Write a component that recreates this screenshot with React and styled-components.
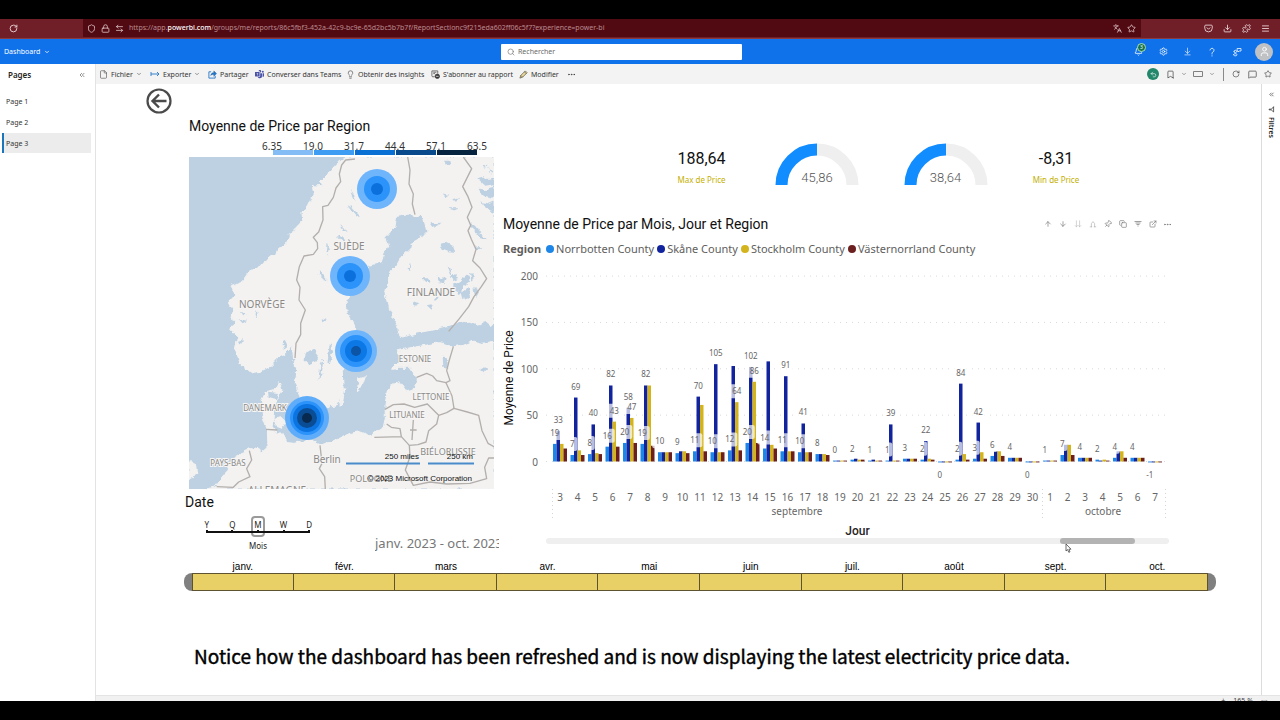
import React from "react";
import styled, { createGlobalStyle } from "styled-components";
import {
  RotateCw, Shield, Lock, ArrowLeftRight, Languages, Star, Pocket, Download, Puzzle, Menu,
  ChevronDown, Search, Bell, Settings, ArrowDownToLine, User, File, Lightbulb,
  Bookmark, MessageSquare, ArrowUp, ArrowDown, Pin, Copy,
  ListFilter, ExternalLink, Ellipsis, ChevronsLeft, Undo2,
} from "lucide-react";
import { BsMicrosoftTeams } from "react-icons/bs";

const ui = `"Noto Sans", "Open Sans", sans-serif`;
const din = `Roboto, "Liberation Sans", sans-serif`;

const Global = createGlobalStyle`
  *, *::before, *::after { box-sizing: border-box; }
  body { margin: 0; background: #000; color: #252423; font-family: ${ui}; }
  button { border: 0; padding: 0; margin: 0; background: none; font: inherit; color: inherit; cursor: pointer; }
  svg { display: block; }
  h1, h2, p { margin: 0; }
`;

const Screen = styled.div`
  display: flex;
  flex-direction: column;
  min-height: 100vh;
  padding: 19px 0;
  background: #000;
`;

/* ---------- browser and app header ---------- */

const BrowserBar = styled.div`
  display: flex;
  height: 20px;
  flex: none;
  background: #701f29;
  color: #e6cfd1;
  border-bottom: 1px solid #8a3a41;
`;
const ReloadSlot = styled.div`
  width: 83px;
  padding: 5px 0 0 9px;
`;
const AddressBar = styled.div`
  flex: 1;
  display: flex;
  align-items: center;
  gap: 5px;
  min-width: 0;
  height: 18px;
  padding: 0 5px 0 4px;
  background: #520a12;
`;
const Url = styled.span`
  flex: 1;
  overflow: hidden;
  white-space: nowrap;
  font-size: 7px;
  line-height: 10px;
  color: #b98c91;
  b { color: #fff; font-weight: 500; }
`;
const IconRow = styled.div`
  display: flex;
  align-items: center;
  padding-right: ${(p) => p.$end || 0}px;
`;
const IconSlot = styled.button`
  display: flex;
  align-items: center;
  justify-content: center;
  flex: none;
  width: ${(p) => p.$w}px;
`;
const BrowserTools = styled(IconRow)`
  width: 139px;
  justify-content: flex-end;
`;

const AppHeader = styled.header`
  display: grid;
  grid-template-columns: 501fr 241fr 538fr;
  align-items: center;
  flex: none;
  height: 25px;
  background: #1072eb;
  color: #fff;
`;
const Crumb = styled.button`
  display: flex;
  align-items: center;
  gap: 4px;
  padding-left: 4px;
  font-size: 7px;
`;
const SearchBox = styled.label`
  display: flex;
  align-items: center;
  gap: 3px;
  height: 16px;
  padding: 0 6px;
  border-radius: 1px;
  background: #fff;
  color: #777;
`;
const SearchInput = styled.input`
  flex: 1;
  min-width: 0;
  border: 0;
  padding: 0;
  outline: none;
  background: none;
  font: 7px/12px ${ui};
  &::placeholder { color: #6a6a6a; opacity: 1; }
`;
const HeaderTools = styled(IconRow)`
  justify-content: flex-end;
`;
const BellWrap = styled.span`
  position: relative;
`;
const BellBadge = styled.span`
  position: absolute;
  left: 3px;
  top: -4px;
  width: 9px;
  height: 9px;
  border: 1px solid #a9e0b4;
  border-radius: 50%;
  background: #16744f;
  font-size: 5px;
  line-height: 7px;
  text-align: center;
`;
const Avatar = styled.span`
  display: flex;
  align-items: center;
  justify-content: center;
  width: 18px;
  height: 18px;
  margin-left: 6px;
  border-radius: 50%;
  background: #bfc1c4;
`;

/* ---------- workspace frame ---------- */

const Workspace = styled.div`
  display: flex;
  flex: 1;
  background: #fff;
`;
const Sidebar = styled.nav`
  width: 96px;
  flex: none;
  border-right: 1px solid #e3e3e3;
`;
const SidebarHead = styled.div`
  display: flex;
  justify-content: space-between;
  align-items: center;
  height: 21px;
  margin-bottom: 6px;
  padding: 0 9px 0 8px;
  font-size: 8px;
  font-weight: 600;
`;
const PageLink = styled.a`
  display: flex;
  align-items: center;
  height: 20px;
  margin: 0 4px 1px 2px;
  padding-left: ${(p) => (p.$active ? 2 : 4)}px;
  border-left: ${(p) => (p.$active ? "2px solid #1b75bb" : "0")};
  background: ${(p) => (p.$active ? "#ececec" : "none")};
  font-size: 7px;
  color: #333;
  text-decoration: none;
`;
const Column = styled.div`
  flex: 1;
  min-width: 0;
  display: flex;
  flex-direction: column;
`;
const Toolbar = styled.div`
  display: flex;
  align-items: center;
  justify-content: space-between;
  flex: none;
  height: 20px;
  padding-left: 3px;
  background: #f3f3f3;
`;
const Commands = styled.div`
  display: flex;
  align-items: center;
`;
const Command = styled.button`
  display: flex;
  align-items: center;
  gap: 3px;
  width: ${(p) => p.$w}px;
  white-space: nowrap;
  font-size: 7px;
  color: #333;
  svg { flex: none; }
`;
const Live = styled.span`
  display: flex;
  align-items: center;
  justify-content: center;
  width: 12px;
  height: 12px;
  border-radius: 50%;
  background: #23876b;
  color: #fff;
`;
const Divider = styled.span`
  width: 1px;
  height: 13px;
  margin: 0 4px 0 8px;
  background: #8a8a8a;
`;
const Stage = styled.div`
  display: flex;
  flex: 1;
`;
const FilterPane = styled.aside`
  display: flex;
  flex-direction: column;
  align-items: center;
  gap: 8px;
  width: 19px;
  flex: none;
  padding-top: 7px;
  border-left: 1px solid #dcdcdc;
`;
const FilterLabel = styled.span`
  writing-mode: vertical-rl;
  margin-top: -4px;
  font-size: 7px;
  line-height: 10px;
  font-weight: 600;
`;
const StatusBar = styled.footer`
  display: flex;
  justify-content: flex-end;
  gap: 8px;
  flex: none;
  height: 6px;
  padding-right: 12px;
  overflow: hidden;
  background: #f1f1f1;
  border-top: 1px solid #e4e4e4;
  font-size: 7px;
  line-height: 10px;
  color: #444;
`;

/* ---------- report canvas ---------- */

const Report = styled.main`
  flex: 1;
  min-width: 0;
  padding: 4px 45px 20px 50px;
`;
const BackButton = styled.button`
  display: block;
  width: 26px;
  height: 26px;
`;
const Visuals = styled.div`
  display: grid;
  grid-template-columns: 314px minmax(0, 1fr);
  column-gap: 4px;
  margin: 4px 0 0 39px;
`;
const Title = styled.h2`
  font: 400 14px/16px ${din};
  color: #111;
`;
const MapVisual = styled.section`
  width: 305px;
  margin-left: 4px;
`;
const DateTitle = styled(Title)`
  margin-top: 5px;
`;
const SlicerRow = styled.div`
  display: flex;
  align-items: flex-start;
  justify-content: space-between;
  margin-top: 6px;
`;
const Granularity = styled.div`
  display: grid;
  grid-template-columns: repeat(5, 1fr);
  align-content: start;
  width: 128px;
  margin-left: 9px;
  font-size: 8px;
  line-height: 10px;
  text-align: center;
`;
const Grain = styled.button`
  display: flex;
  flex-direction: column;
  align-items: center;
  height: 21px;
  padding-top: 4px;
`;
const GrainBox = styled.span`
  width: 14px;
  height: 21px;
  margin: -4px 0;
  padding-top: 2px;
  border: ${(p) => (p.$on ? "2px solid #9a9a9a" : "2px solid transparent")};
  border-radius: 4px;
  &::after {
    content: "";
    display: block;
    width: 2px;
    height: 2px;
    margin: 0 auto;
    background: #111;
  }
`;
const GrainLine = styled.span`
  grid-column: 1 / -1;
  height: 2px;
  margin: -6px 12px 0;
  background: #111;
`;
const GrainName = styled.span`
  grid-column: 1 / -1;
  padding-top: 4px;
`;
const Period = styled.p`
  width: 124px;
  margin-top: 18px;
  overflow: hidden;
  white-space: nowrap;
  font-size: 13px;
  line-height: 18px;
  color: #777;
`;

const Right = styled.div`
  min-width: 0;
`;
const Kpis = styled.div`
  display: grid;
  grid-template-columns: 117fr 114fr 143fr 78fr;
  justify-items: center;
  height: 96px;
  padding: 25px 121px 0 140px;
`;
const Card = styled.div`
  padding-top: 6px;
  text-align: center;
  white-space: nowrap;
`;
const CardValue = styled.p`
  font: 400 16px/20px ${din};
  color: #111;
`;
const CardLabel = styled.p`
  padding-top: 5px;
  font-size: 8px;
  line-height: 12px;
  color: #c4b000;
`;
const GaugeBox = styled.div`
  position: relative;
  width: 84px;
  height: 42px;
`;
const GaugeValue = styled.span`
  position: absolute;
  inset: auto 0 0 0;
  text-align: center;
  font: 300 13px/14px ${din};
  color: #555;
`;
const ChartHead = styled.div`
  display: flex;
  align-items: center;
  justify-content: space-between;
  height: 20px;
  padding-right: 41px;
  color: #777;
`;
const Legend = styled.div`
  display: flex;
  align-items: center;
  gap: 3px;
  height: 16px;
  margin: 7px 0 5px;
  font-size: 11px;
  line-height: 16px;
  white-space: nowrap;
  color: #605e5c;
  b { margin-right: 2px; }
`;
const LegendItem = styled.span`
  display: flex;
  align-items: center;
  gap: 2px;
  &::before {
    content: "";
    width: 8px;
    height: 8px;
    border-radius: 50%;
    background: ${(p) => p.$color};
  }
`;
const ChartSvg = styled.svg`
  width: 100%;
  height: auto;
`;
const AxisName = styled.p`
  padding-right: 4px;
  text-align: center;
  font: 500 12px/14px ${din};
  color: #252423;
`;
const ScrollTrack = styled.div`
  position: relative;
  height: 6px;
  margin: 0 47px 0 43px;
  border-radius: 3px;
  background: #efefef;
`;
const ScrollThumb = styled.div`
  width: 12%;
  height: 6px;
  margin-left: 82.5%;
  border-radius: 3px;
  background: #b3b3b3;
`;
const Pointer = styled.svg`
  position: absolute;
  left: 83.3%;
  top: 5px;
`;

const Timeline = styled.section`
  display: grid;
  grid-template-columns: 8px repeat(10, minmax(0, 1fr)) 8px;
  margin: 8px 0 0 38px;
`;
const Month = styled.span`
  text-align: center;
  font: 10px/13px "Liberation Sans", sans-serif;
  color: #000;
`;
const MonthCell = styled.button`
  height: 18px;
  border: 1px solid #5d5330;
  border-left-width: ${(p) => (p.$first ? 1 : 0)}px;
  background: #e8d066;
`;
const Cap = styled.span`
  height: 18px;
  background: #808080;
  border-radius: ${(p) => (p.$right ? "0 9px 9px 0" : "9px 0 0 9px")};
`;
const Caption = styled.p`
  padding: 50px 0 0 48px;
  font: 700 19px/30px "Noto Sans CJK SC", sans-serif;
  color: #000;
  white-space: nowrap;
  font-weight: 400;
  -webkit-text-stroke: 0.4px #000;
`;

/* ---------- small drawings ---------- */

const Line = ({ size = 10, box = 20, d, w = 1.6, ...rest }) => (
  <svg width={size} height={size} viewBox={`0 0 ${box} ${box}`} fill="none" stroke="currentColor"
    strokeWidth={w} strokeLinecap="round" strokeLinejoin="round" {...rest}>
    <path d={d} />
  </svg>
);

const ExportIcon = () => (
  <svg width="10" height="8" viewBox="0 0 20 16" fill="none" strokeWidth="1.8">
    <path d="M2 4v8" stroke="#2477c9" /><path d="M2 8h16M14 4l4 4-4 4" stroke="#2477c9" />
  </svg>
);
const ShareIcon = () => (
  <svg width="9" height="9" viewBox="0 0 20 20" fill="none" strokeWidth="2">
    <path d="M7 4H2v14h14v-5" stroke="#2477c9" />
    <path d="M6 12c1-5 4-6 7-6V2l6 6-6 6v-4c-3 0-5 0-7 2z" fill="#2477c9" stroke="#1c5c9c" strokeWidth="1" />
  </svg>
);
const SubscribeIcon = () => (
  <svg width="9" height="9" viewBox="0 0 20 20" fill="none" stroke="#444" strokeWidth="1.6">
    <path d="M8 15H4a2 2 0 0 1-2-2V2h13v6M5 5h7M5 8h4" />
    <circle cx="14" cy="14" r="5" fill="#333" /><path d="M11 14h6" stroke="#fff" />
  </svg>
);
const PencilIcon = () => (
  <svg width="9" height="9" viewBox="0 0 20 20" stroke="#4a4432" strokeWidth="1.4" strokeLinejoin="round">
    <path d="M2 18l2-6L14 2l4 4L8 16z" fill="#e8d79a" /><path d="M4 12l4 4M12 4l4 4" fill="none" />
  </svg>
);
const ViewIcon = () => (
  <svg width="10" height="8" viewBox="0 0 10 8" fill="none" stroke="#808080"><path d="M.5 1.500h9v5h-9z" /></svg>
);
const FunnelIcon = () => (
  <svg width="8" height="8" viewBox="0 0 16 16" fill="none" stroke="currentColor" strokeWidth="1.4">
    <path d="M1 3h14M3 6h10M5 9h6M7 12h2" />
  </svg>
);

/* ---------- map ---------- */

const LAND = [
  "M497 141L480 152 455 178 440 196 422 214 428 226 400 228 404 250 385 290 366 306 368 332 345 356 328 372 320 402 295 422 268 440 244 468 205 488 186 515 150 528 168 556 148 578 160 600 156 622 168 640 150 655 172 682 165 722 182 762 214 788 242 784 272 768 300 738 324 720 334 702 342 750 350 786 346 822 358 856 372 884 400 912 432 892 470 888 490 842 488 810 487 784 500 750 530 700 545 672 520 645 502 612 498 572 530 540 562 502 570 466 604 456 612 430 626 410 618 380 645 350 650 316 680 312 700 318 730 320 740 362 718 386 700 396 690 416 664 440 650 466 634 482 624 512 617 548 628 592 640 622 652 648 660 682 700 671 760 660 812 648 850 630 878 640 905 650 942 640V141Z",
  "M942 694L905 700 880 694 850 706 822 710 770 700 700 712 652 722 664 746 640 772 690 772 712 806 702 840 680 845 665 824 646 816 624 840 615 880 616 922 610 952 590 964 575 978 540 965 510 970 460 994 420 1004 390 990 342 1000 320 998 312 972 290 972 262 958 264 1010 246 1026 230 1014 205 1020 170 1034 150 1060 135 1090 104 1130 84 1137H942Z",
  "M262 960L248 920 244 870 256 846 290 836 298 818 306 840 290 870 284 900 280 950 292 968Z",
  "M284 925L302 920 316 935 306 952 290 946Z",
  "M536 806L556 800 546 830 532 842Z",
  "M484 858L494 836 488 876 480 886Z",
  "M640 770L658 764 654 776 638 778Z",
  "M27 1052L50 1066 52 1088 40 1104 27 1108Z",
];
const WATER = [
  "M380 725l22-8 12 14-4 22-24 10-14-14z", "M422 762l8-16-4 40-12 24z", "M448 708l6-6 4 20-12 42-4-2z",
  "M506 285l12 10 22 24-8 2-20-22z", "M510 240l12 16 6 16-10-8z", "M478 346l12 8 10 16-12-8z", "M470 375l14 4 18 18-14-4z",
  "M420 480l8 14 18 20-14-4-16-16z", "M440 395l6 20-4 22-4-18z", "M782 402l14-4 24 10 6 18-18-2-20-8z",
  "M788 250l20 4-10 8z", "M820 268l18-6-10 14z", "M800 292l38 0-14 6z", "M795 152l16 0 4 16-14-6z", "M892 205l20-6 10 8 20-4v20l-26 4z",
  "M896 236l22 4 24-6v30l-30-6-10-10z", "M904 276l20 4 18-8v34l-22-10z", "M870 340l16 4 18 26-6 4-18-16z",
  "M886 370l20 6 12 12-18-4z", "M884 410l16-2 10 8-20 2z", "M750 340l36-2-28 14z",
  "M690 460l4 20-8-4z", "M725 505l18 0 12 14-20-4z", "M770 492l12 16 18-8-6 22-18-6z", "M800 470l16 8-4 20z",
  "M820 520l20-6 24-20 6 22-16 12-14 24-20-10z", "M842 548l20-14 10 26-24 10z", "M870 486l12 12-8 18z",
  "M880 530l20 14-14 20z", "M760 550l16 12-12 8z", "M700 572l18 8-14 8z", "M812 500l14-8 8 12-14 6z",
  "M740 586l18-4-6 14z", "M900 780l12-8 10 8-10 10z", "M788 740l16 2-2 34-12-6z", "M425 625l14 4-12 8z",
  "M892 648l24-14 26 20v40l-40-12z", "M910 160l12 10-10 6z", "M925 170l14 20-10 0z",
  "M180 605l20 8-14 6z", "M176 628l26 4-14 8z", "M230 600l4 24-8-10z", "M310 690l8 16-4 18-6-20z", "M174 695l16-4-10 16z",
  "M264 848l30 4-6 16-22-6z",
];
const BORDERS = [
  "M525 147L497 150 485 165 478 192 482 215 468 234 460 262 444 286 428 290 429 330 416 366 400 382 412 398 413 416 400 433 372 438 358 470 350 510 360 532 357 570 376 600 362 640 362 674 348 700 345 744",
  "M683 141L690 180 687 222 700 252 697 282 705 314",
  "M850 141L875 176 848 230 864 260 876 292 862 322 872 346 864 362 874 388 888 418 878 452 900 474 920 506 904 530 882 560 866 590 838 626 806 664",
  "M820 710L808 750 800 782 810 812 798 818 816 858 822 895",
  "M710 802L740 790 758 798 770 812 798 818",
  "M615 898L640 884 672 882 704 892 742 882 776 916 800 908 822 895 862 906 896 916 906 962 924 1000 942 1010",
  "M776 916L770 942 746 962 738 996 714 1004 688 1006 664 980 583 982M664 980L660 956 634 952 620 942",
  "M688 1006L690 1040 676 1080 700 1126 750 1116 800 1122 870 1120 920 1106 914 1072 926 1044 942 1044",
  "M420 1006L426 1060 418 1076 434 1100 436 1137",
  "M208 1022L215 1050 200 1076 210 1100 176 1116 160 1132 110 1130",
  "M258 958L292 960",
  "M700 930l-4 60M690 960h20",
];
const BUBBLES = [
  { x: 188, y: 32, rings: [[20, "#6fb5fb"], [13, "#2b93fa"], [6, "#0c70dc"]] },
  { x: 161, y: 119, rings: [[20, "#6fb5fb"], [13, "#2b93fa"], [6, "#0c70dc"]] },
  { x: 167, y: 194, rings: [[21, "#6fb5fb"], [16, "#2b93fa"], [11, "#0c78e6"], [5, "#0b54a6"]] },
  { x: 118, y: 261, rings: [[22, "#5fadfa"], [17, "#2b93fa"], [14, "#0c74e0"], [10, "#0a4d94"], [5, "#082a4e"]] },
];
const PLACES = [
  ["SUÈDE", 160, 93, 10], ["NORVÈGE", 73, 151, 10], ["FINLANDE", 242, 139, 10], ["ESTONIE", 226, 205, 8],
  ["LETTONIE", 242, 243, 8], ["LITUANIE", 218, 261, 8], ["DANEMARK", 76, 254, 8], ["PAYS-BAS", 39, 309, 8],
  ["BIÉLORUSSIE", 259, 298, 9], ["Berlin", 138, 306, 10], ["POLOGNE", 182, 325, 9], ["ALLEMAGNE", 88, 337, 10],
];

const RegionMap = () => (
  <svg width="305" height="332" viewBox="0 0 305 332" role="img" aria-label="Carte">
    <defs>
      <filter id="coast" x="0" y="0" width="100%" height="100%">
        <feTurbulence type="fractalNoise" baseFrequency="0.18" numOctaves="2" seed="4" />
        <feDisplacementMap in="SourceGraphic" scale="6" xChannelSelector="R" yChannelSelector="G" />
      </filter>
    </defs>
    <rect width="305" height="332" fill="#bed1e2" />
    <g filter="url(#coast)">
      <g transform="translate(-9 -47) scale(.33333)">
        {LAND.map((d) => <path key={d} d={d} fill="#f3f2f1" stroke="#f3f2f1" strokeWidth="3" />)}
        {WATER.map((d) => <path key={d} d={d} fill="#bed1e2" />)}
      </g>
    </g>
    <g transform="translate(-9 -47) scale(.33333)" fill="none" stroke="#b3afac" strokeWidth="4" strokeLinejoin="round">
      {BORDERS.map((d) => <path key={d} d={d} />)}
    </g>
    <g fill="#8b8987" textAnchor="middle" fontFamily={ui}>
      {PLACES.map(([t, x, y, s]) => <text key={t} x={x} y={y} fontSize={s} stroke="#f6f5f4" strokeWidth="2" paintOrder="stroke">{t}</text>)}
    </g>
    {BUBBLES.map((b) => b.rings.map(([r, c]) => <circle key={`${b.x}-${r}`} cx={b.x} cy={b.y} r={r} fill={c} />))}
    <path d="M157 306.5h74M239 306.5h46" stroke="#4a8bc9" strokeWidth="2" />
    <g fontFamily={`"Liberation Sans", sans-serif`} fontSize="8" fill="#111" textAnchor="end">
      <text x="230" y="302">250 miles</text>
      <text x="284" y="302">250 km</text>
      <text x="283" y="324">© 2023 Microsoft Corporation</text>
    </g>
  </svg>
);

const SCALE = [["6.35", "#84bdf5"], ["19.0", "#3f9cf3"], ["31.7", "#0a70d4"], ["44.4", "#084a8c"], ["57.1", "#06233f"], ["63.5"]];
const ColorScale = () => (
  <svg width="305" height="23" viewBox="0 0 305 23">
    {SCALE.slice(0, 5).map(([v, c], i) => <rect key={v} x={84 + i * 41} y="16" width="40" height="5" fill={c} />)}
    <g fontFamily={ui} fontSize="10" fill="#333" textAnchor="middle">
      {SCALE.map(([v], i) => <text key={v} x={83 + i * 41} y="16">{v}</text>)}
    </g>
  </svg>
);

/* ---------- column chart ---------- */

const COLORS = ["#1e86e6", "#12239e", "#d4b41c", "#6b1f1f"];
const REGIONS = ["Norrbotten County", "Skåne County", "Stockholm County", "Västernorrland County"];
/* day, four regional values, and which of them carry a label */
const DAYS = [
  [3, [19, 33, 19, 14], [19, 33]], [4, [7, 69, 12, 7], [7, 69]], [5, [8, 40, 9, 8], [8, 40]],
  [6, [16, 82, 43, 16], [16, 82, 43]], [7, [20, 58, 47, 20], [20, 58, 47]], [8, [19, 82, 82, 17], [19, 82]],
  [9, [10, 10, 10, 10], [10]], [10, [9, 11, 11, 9], [9]], [11, [11, 70, 61, 11], [11, 70]],
  [12, [10, 105, 10, 10], [10, 105]], [13, [12, 103, 64, 12], [12, null, 64]], [14, [20, 102, 86, 20], [20, 102, 86]],
  [15, [14, 108, 18, 14], [14]], [16, [11, 92, 11, 11], [11, 91]], [17, [10, 41, 10, 10], [10, 41]],
  [18, [8, 8, 8, 7], [8]], [19, [1, 1, 1, 1], [0]], [20, [2, 3, 2, 2], [2]], [21, [1, 2, 1, 1], [1]],
  [22, [1, 40, 1, 1], [1, 39]], [23, [3, 3, 3, 3], [3]], [24, [2, 22, 3, 2], [2, 22]], [25, [-1, -1, -1, -1], [0]],
  [26, [2, 84, 8, 2], [2, 84]], [27, [3, 42, 10, 3], [3, 42]], [28, [6, 11, 11, 6], [6]], [29, [4, 4, 4, 4], [4]],
  [30, [-1, -1, -1, -1], [0]], [1, [1, 1, 1, 1], [1]], [2, [7, 18, 18, 7], [7]], [3, [4, 4, 4, 4], [4]],
  [4, [2, 1, 2, 1], [2]], [5, [4, 11, 11, 4], [4]], [6, [4, 4, 4, 4], [4]], [7, [-1, -1, -1, -1], [-1]],
];
const BASE = 199.5;
const UNIT = 0.927;
const STEP = 17.5;
const BAR = 3.5;

const PriceChart = () => (
  <ChartSvg viewBox="0 0 713 262" role="img" aria-label="Moyenne de Price par Mois, Jour et Region" fontFamily={ui}>
    {[0, 50, 100, 150, 200].map((v) => {
      const y = BASE - v * UNIT;
      return (
        <g key={v}>
          <path d={`M43 ${y}H666`} stroke="#d9d9d9" strokeDasharray="1 5" />
          <text x="35" y={y + 4} fontSize="10" textAnchor="end" fill="#666">{v}</text>
        </g>
      );
    })}
    {DAYS.map(([, vals], i) => vals.map((v, k) => (
      <rect key={`${i}-${k}`} x={50 + i * STEP + k * BAR} width={BAR} fill={COLORS[k]}
        y={v < 0 ? BASE : BASE - v * UNIT} height={Math.abs(v) * UNIT} />
    )))}
    {DAYS.map(([, vals, labels], i) => labels.map((t, k) => {
      if (t === null) return null;
      const x = 50 + i * STEP + (k + 0.5) * BAR;
      const y = vals[k] < 0 ? BASE + 13 : BASE - vals[k] * UNIT - 11;
      const w = String(t).length * 5 + 5;
      return (
        <g key={`${i}-${k}`}>
          <rect x={x - w / 2} y={y - 7} width={w} height="14" rx="2" fill="#fff" opacity=".7" />
          <text x={x} y={y + 3} fontSize="8" textAnchor="middle" fill="#666">{t}</text>
        </g>
      );
    }))}
    <g fontSize="10" textAnchor="middle" fill="#666">
      {DAYS.map(([d], i) => <text key={i} x={57 + i * STEP} y="239">{d}</text>)}
      <text x="294" y="253">septembre</text>
      <text x="600" y="253">octobre</text>
    </g>
    <path d="M49.500 227v31M539.500 227v31M662.500 227v31" stroke="#d5d5d5" strokeDasharray="1 3" />
    <text transform="translate(10 116) rotate(-90)" fontSize="12" textAnchor="middle" fontFamily={din} fill="#111">Moyenne de Price</text>
  </ChartSvg>
);

const Gauge = ({ value }) => (
  <GaugeBox>
    <svg width="84" height="42" viewBox="0 0 84 42" fill="none" strokeWidth="12">
      <path d="M42 6.500A35.500 35.500 0 0 1 77.500 42" stroke="#efefef" />
      <path d="M6.500 42A35.500 35.500 0 0 1 42 6.500" stroke="#118dff" />
    </svg>
    <GaugeValue>{value}</GaugeValue>
  </GaugeBox>
);

const CHART_TOOLS = [
  ["Monter", <ArrowUp size={8} />], ["Descendre", <ArrowDown size={8} />],
  ["Niveau suivant", <Line size={8} d="M6 2v15M3 14l3 3 3-3M14 2v15M11 14l3 3 3-3" opacity=".5" />],
  ["Développer", <Line size={8} d="M6 17V9l4-5 4 5v8M3 17h4M13 17h4" opacity=".6" />],
  ["Épingler", <Pin size={8} style={{ rotate: "45deg" }} />], ["Copier", <Copy size={8} />],
  ["Filtres du visuel", <FunnelIcon />], ["Mode focus", <ExternalLink size={8} />], ["Plus", <Ellipsis size={9} />],
];
const MONTHS = ["janv.", "févr.", "mars", "avr.", "mai", "juin", "juil.", "août", "sept.", "oct."];

export default function App() {
  return (
    <Screen>
      <Global />
      <BrowserBar>
        <ReloadSlot><RotateCw size={9} strokeWidth={2.5} /></ReloadSlot>
        <AddressBar>
          <Shield size={9} /><Lock size={9} /><ArrowLeftRight size={9} />
          <Url>https://app.<b>powerbi.com</b>/groups/me/reports/86c5fbf3-452a-42c9-bc9e-65d2bc5b7b7f/ReportSectionc9f215eda602ff06c5f7?experience=power-bi</Url>
          <Languages size={9} /><Star size={9} />
        </AddressBar>
        <BrowserTools $end={5}>
          {[Pocket, Download, Puzzle, Menu].map((I, i) => (
            <IconSlot key={i} $w={19} aria-label="Navigateur"><I size={9} strokeWidth={2.4} /></IconSlot>
          ))}
        </BrowserTools>
      </BrowserBar>

      <AppHeader>
        <Crumb>Dashboard <ChevronDown size={6} strokeWidth={3} /></Crumb>
        <SearchBox>
          <Search size={8} />
          <SearchInput type="search" placeholder="Rechercher" aria-label="Rechercher" />
        </SearchBox>
        <HeaderTools $end={7}>
          <IconSlot $w={25} aria-label="Notifications"><BellWrap><Bell size={9} /><BellBadge>3</BellBadge></BellWrap></IconSlot>
          <IconSlot $w={24} aria-label="Paramètres"><Settings size={9} /></IconSlot>
          <IconSlot $w={25} aria-label="Télécharger"><ArrowDownToLine size={9} strokeWidth={1.6} /></IconSlot>
          <IconSlot $w={24} aria-label="Aide"><Line size={10} d="M6 6a4 4 0 1 1 6 4c-2 1-2 2-2 4M10 17.500v.5" /></IconSlot>
          <IconSlot $w={25} aria-label="Commentaires">
            <Line size={10} w={1.5} d="M11 3h7v5h-4l-2 2V8h-1zM4 9a2.500 2.500 0 1 0 5 0a2.500 2.500 0 1 0-5 0M3 15.500c0-3 7-3 7 0s-7 3-7 0" />
          </IconSlot>
          <Avatar><User size={11} /></Avatar>
        </HeaderTools>
      </AppHeader>

      <Workspace>
        <Sidebar>
          <SidebarHead>Pages <ChevronsLeft size={8} strokeWidth={1.5} /></SidebarHead>
          {["Page 1", "Page 2", "Page 3"].map((p, i) => (
            <PageLink key={p} href="#" $active={i === 2}>{p}</PageLink>
          ))}
        </Sidebar>
        <Column>
          <Toolbar>
            <Commands>
              <Command $w={51}><File size={9} strokeWidth={1.4} />Fichier<ChevronDown size={6} /></Command>
              <Command $w={58}><ExportIcon />Exporter<ChevronDown size={6} /></Command>
              <Command $w={47}><ShareIcon />Partager</Command>
              <Command $w={91}><BsMicrosoftTeams size={9} color="#4b53a8" />Converser dans Teams</Command>
              <Command $w={85}><Lightbulb size={9} strokeWidth={1.5} />Obtenir des insights</Command>
              <Command $w={88}><SubscribeIcon />S'abonner au rapport</Command>
              <Command $w={48}><PencilIcon />Modifier</Command>
              <Command $w={12} aria-label="Plus"><Ellipsis size={9} strokeWidth={1.8} /></Command>
            </Commands>
            <IconRow $end={4}>
              <Live><Undo2 size={7} /></Live>
              <IconSlot $w={22} aria-label="Signets"><Bookmark size={9} strokeWidth={1.6} /></IconSlot>
              <ChevronDown size={6} strokeWidth={1.6} />
              <IconSlot $w={22} aria-label="Affichage"><ViewIcon /></IconSlot>
              <ChevronDown size={6} strokeWidth={1.6} />
              <Divider />
              <IconSlot $w={16} aria-label="Actualiser"><RotateCw size={8} strokeWidth={1.6} /></IconSlot>
              <IconSlot $w={16} aria-label="Commentaire"><MessageSquare size={9} strokeWidth={1.6} /></IconSlot>
              <IconSlot $w={16} aria-label="Favori"><Star size={8} strokeWidth={1.6} /></IconSlot>
            </IconRow>
          </Toolbar>

          <Stage>
            <Report>
              <BackButton aria-label="Retour">
                <svg width="26" height="26" viewBox="0 0 26 26" fill="none" stroke="#4a4a4a">
                  <circle cx="13" cy="13" r="11.5" strokeWidth="2.2" /><path d="M20.500 13H7M13 6.500L6.500 13l6.500 6.500" strokeWidth="2.400" />
                </svg>
              </BackButton>
              <Visuals>
                <div>
                  <MapVisual>
                    <Title>Moyenne de Price par Region</Title>
                    <ColorScale />
                    <RegionMap />
                  </MapVisual>
                  <DateTitle>Date</DateTitle>
                  <SlicerRow>
                    <Granularity>
                      {["Y", "Q", "M", "W", "D"].map((g) => (
                        <Grain key={g}><GrainBox $on={g === "M"}>{g}</GrainBox></Grain>
                      ))}
                      <GrainLine />
                      <GrainName>Mois</GrainName>
                    </Granularity>
                    <Period>janv. 2023 - oct. 2023</Period>
                  </SlicerRow>
                </div>
                <Right>
                  <Kpis>
                    <Card><CardValue>188,64</CardValue><CardLabel>Max de Price</CardLabel></Card>
                    <Gauge value="45,86" />
                    <Gauge value="38,64" />
                    <Card><CardValue>-8,31</CardValue><CardLabel>Min de Price</CardLabel></Card>
                  </Kpis>
                  <ChartHead>
                    <Title>Moyenne de Price par Mois, Jour et Region</Title>
                    <IconRow>
                      {CHART_TOOLS.map(([n, icon]) => <IconSlot key={n} $w={15} aria-label={n}>{icon}</IconSlot>)}
                    </IconRow>
                  </ChartHead>
                  <Legend>
                    <b>Region</b>
                    {REGIONS.map((r, i) => <LegendItem key={r} $color={COLORS[i]}>{r}</LegendItem>)}
                  </Legend>
                  <PriceChart />
                  <AxisName>Jour</AxisName>
                  <ScrollTrack>
                    <ScrollThumb />
                    <Pointer width="7" height="10" viewBox="0 0 7 10" fill="#fff" stroke="#444" strokeWidth=".8">
                      <path d="M1 1v7l1.600-1.400L3.800 9.300 5 8.800 3.900 6.200H6z" />
                    </Pointer>
                  </ScrollTrack>
                </Right>
              </Visuals>
              <Timeline>
                <span />
                {MONTHS.map((m) => <Month key={m}>{m}</Month>)}
                <span />
                <Cap />
                {MONTHS.map((m, i) => <MonthCell key={m} $first={i === 0} aria-label={m} />)}
                <Cap $right />
              </Timeline>
              <Caption>Notice how the dashboard has been refreshed and is now displaying the latest electricity price data.</Caption>
            </Report>
            <FilterPane>
              <ChevronsLeft size={7} />
              <Line size={7} w={2} d="M16 3v14L9 11H3V9h6z" />
              <FilterLabel>Filtres</FilterLabel>
            </FilterPane>
          </Stage>
          <StatusBar><span>-</span><span>+</span><span>165 %</span><span>▭</span></StatusBar>
        </Column>
      </Workspace>
    </Screen>
  );
}
